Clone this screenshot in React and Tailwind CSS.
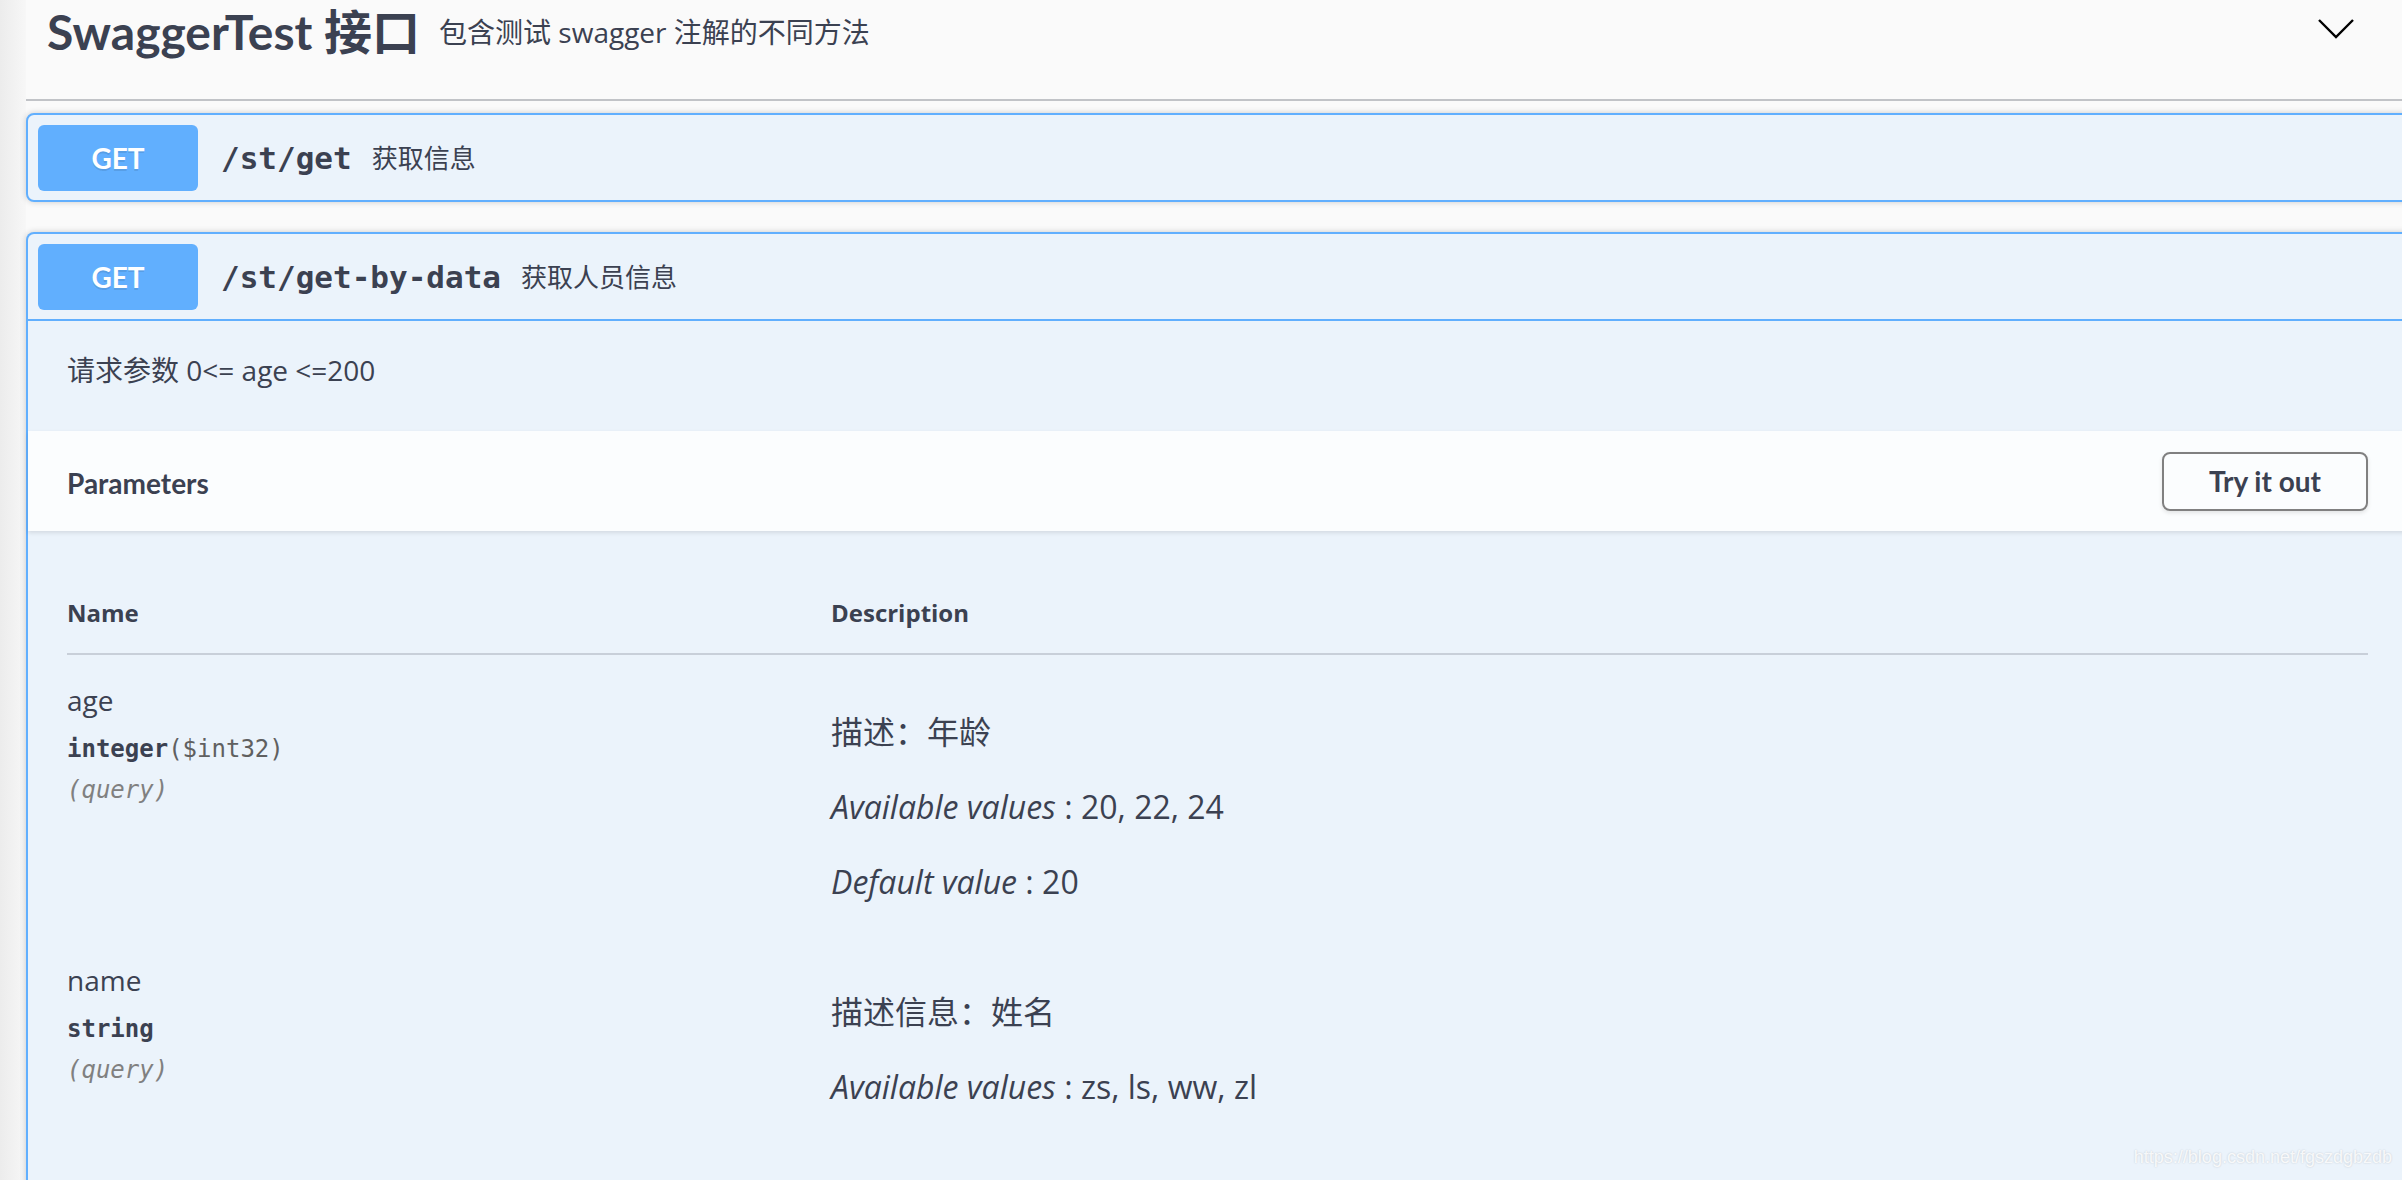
import React from "react";

const sans = "font-['Open_Sans','Noto_Sans_CJK_SC',sans-serif]";
const head = "font-['Lato','Noto_Sans_CJK_SC',sans-serif]";
const mono = "font-['DejaVu_Sans_Mono',monospace]";

function Chevron() {
  return (
    <svg width="36" height="20" viewBox="0 0 36 20" fill="none" stroke="#000" strokeWidth="2.4" className="mb-[6px] ml-auto mr-[48px] block">
      <polyline points="1,1 18,18 35,1" />
    </svg>
  );
}

function Summary({ path, desc, divided }) {
  return (
    <div className={`flex items-center pl-[10px] pt-[10px] pb-[9px] ${divided ? "border-b-2 border-[#61affe]" : ""}`}>
      <div className={`${head} flex h-[66px] w-[160px] items-center justify-center rounded-[6px] bg-[#61affe] text-[28px] font-bold leading-none text-white [text-shadow:0_2px_0_rgba(0,0,0,0.1)]`}>
        GET
      </div>
      <span className={`${mono} ml-[23px] text-[31px] font-bold leading-none text-[#3b4151]`}>{path}</span>
      <span className={`${sans} ml-[20px] text-[26px] leading-none text-[#3b4151]`}>{desc}</span>
    </div>
  );
}

function ParamRow({ name, type, format, lines }) {
  return (
    <div className="flex h-[280px]">
      <div className="w-[764px] shrink-0">
        <div className={`${sans} text-[28px] leading-[36px]`}>{name}</div>
        <div className={`${mono} mt-[15px] text-[24px] font-semibold leading-[32px]`}>
          {type}
          {format && <span className="font-normal text-[#606060]">{format}</span>}
        </div>
        <div className={`${mono} mt-[9px] text-[24px] italic leading-[32px] text-[#808080]`}>(query)</div>
      </div>
      <div className={`${sans} flex flex-col gap-[27px] pt-[26px] text-[32px] leading-[48px]`}>
        {lines.map((l, i) => (
          <p key={i}>
            {l.label && <i>{l.label}</i>}
            {l.text}
          </p>
        ))}
      </div>
    </div>
  );
}

export default function App() {
  return (
    <div className="relative flex h-[1180px] w-[2402px] overflow-hidden bg-[#fafafa] text-[#3b4151]">
      <div className="w-[26px] shrink-0 bg-gradient-to-r from-[#ececec] to-[#f7f7f7]" />
      <div className="min-w-0 flex-1">
        {/* tag header */}
        <div className="border-b-2 border-[#c1c3c7] pb-[35px]">
          <div className="flex h-[64px] items-center pl-[21px]">
            <h4 className={`${head} text-[48px] font-bold leading-none`}>SwaggerTest 接口</h4>
            <small className={`${sans} ml-[19px] text-[28px] leading-none`}>包含测试 swagger 注解的不同方法</small>
            <Chevron />
          </div>
        </div>

        <div className="pt-[12px]">
          <div className="w-[2392px] rounded-[8px] border-2 border-[#61affe] bg-[#ebf3fb] shadow-[0_0_6px_rgba(0,0,0,0.19)]">
            <Summary path="/st/get" desc="获取信息" />
          </div>

          <div className="mt-[30px] w-[2392px] rounded-t-[8px] border-2 border-b-0 border-[#61affe] bg-[#ebf3fb] shadow-[0_0_6px_rgba(0,0,0,0.19)]">
            <Summary path="/st/get-by-data" desc="获取人员信息" divided />

            <div className={`${sans} pl-[39px] pt-[29px] pb-[41px] text-[28px] leading-[40px]`}>
              请求参数 0&lt;= age &lt;=200
            </div>

            <div className="flex h-[100px] items-center bg-[rgba(255,255,255,0.8)] pl-[39px] pr-[48px] shadow-[0_2px_4px_rgba(0,0,0,0.1)]">
              <h4 className={`${head} flex-1 pt-[3px] text-[28px] font-bold leading-none`}>Parameters</h4>
              <button className={`${head} h-[59px] w-[206px] rounded-[8px] border-2 border-[#808080] bg-transparent text-[28px] font-bold text-[#3b4151] shadow-[0_2px_4px_rgba(0,0,0,0.1)]`}>
                Try it out
              </button>
            </div>

            <div className="pl-[39px] pr-[48px]">
              <div className={`${sans} flex border-b-2 border-[#c8cfd9] pt-[64px] pb-[22px] text-[24px] font-bold leading-[36px]`}>
                <div className="w-[764px]">Name</div>
                <div>Description</div>
              </div>
              <div className="pt-[27px]">
                <ParamRow
                  name="age"
                  type="integer"
                  format="($int32)"
                  lines={[
                    { text: "描述：年龄" },
                    { label: "Available values", text: " : 20, 22, 24" },
                    { label: "Default value", text: " : 20" },
                  ]}
                />
                <ParamRow
                  name="name"
                  type="string"
                  lines={[
                    { text: "描述信息：姓名" },
                    { label: "Available values", text: " : zs, ls, ww, zl" },
                  ]}
                />
              </div>
            </div>
          </div>
        </div>
      </div>

      <span className="absolute bottom-[9px] right-[10px] font-['Liberation_Sans',sans-serif] text-[18px] text-[rgba(255,255,255,0.85)] [text-shadow:0_0_2px_rgba(0,0,0,0.18)]">
        https://blog.csdn.net/fgszdgbzdb
      </span>
    </div>
  );
}
